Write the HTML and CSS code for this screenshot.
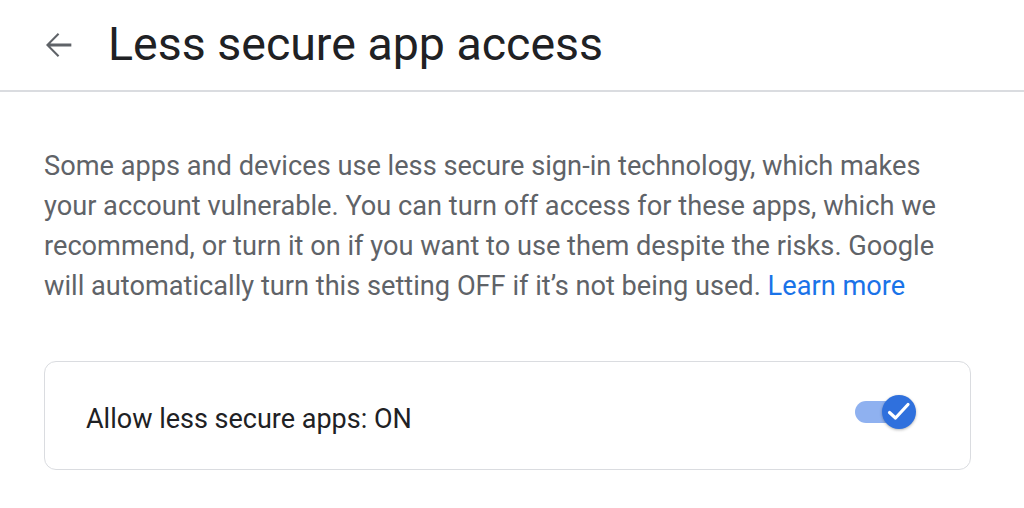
FILE: index.html
```html
<!DOCTYPE html>
<html lang="en">
<head>
    <meta charset="UTF-8">
    <meta name="viewport" content="width=device-width, initial-scale=1.0">
    <title>Less secure app access</title>
    <link rel="stylesheet" href="styles.css">
</head>
<body>
    <header class="topbar">
        <button class="back" aria-label="Back">
            <svg width="40" height="40" viewBox="0 0 24 24">
                <path d="M20 11.1H7.4l5.4-5.4-0.9-0.9L4.8 12l7.1 7.2 0.9-0.9-5.4-5.4H20z" fill="#5f6368"/>
            </svg>
        </button>
        <h1 class="title">Less secure app access</h1>
    </header>

    <main class="content">
        <p class="intro">
            Some apps and devices use less secure sign-in technology, which makes
            your account vulnerable. You can turn off access for these apps, which we
            recommend, or turn it on if you want to use them despite the risks. Google
            will automatically turn this setting OFF if it’s not being used.
            <a href="#" class="link">Learn more</a>
        </p>

        <div class="card">
            <span class="card-label">Allow less secure apps: ON</span>
            <div class="switch">
                <div class="track"></div>
                <div class="thumb">
                    <svg width="24" height="24" viewBox="0 0 24 24">
                        <path d="M2.5 12.5l6 5.5L21 4.5" fill="none" stroke="#fff" stroke-width="3.2" stroke-linecap="round" stroke-linejoin="round"/>
                    </svg>
                </div>
            </div>
        </div>
    </main>
</body>
</html>
```

FILE: styles.css
```css
body {
    margin: 0;
    background-color: #fff;
    font-family: Roboto, 'Noto Sans', sans-serif;
}
.topbar {
    display: flex;
    align-items: center;
    height: 90px;
    padding-left: 38px;
    border-bottom: 2px solid #dadce0;
}
.back {
    display: flex;
    padding: 0;
    border: none;
    background: none;
    cursor: pointer;
    margin-right: 30px;
}
.title {
    margin: 0 0 2px;
    font-size: 46.5px;
    font-weight: 400;
    color: #202124;
}
.content {
    padding: 0 53px 0 44px;
}
.intro {
    margin: 54px 0 55px;
    padding-right: 20px;
    font-size: 27.2px;
    line-height: 40px;
    color: #5f6368;
}
.link {
    color: #1a73e8;
    text-decoration: none;
}
.card {
    display: flex;
    align-items: center;
    justify-content: space-between;
    height: 107px;
    padding: 0 54px 0 41px;
    border: 1px solid #dadce0;
    border-radius: 12px;
}
.card-label {
    padding-top: 6px;
    font-size: 27px;
    color: #202124;
}
.switch {
    position: relative;
    width: 61px;
    height: 34px;
    margin-bottom: 8px;
}
.track {
    position: absolute;
    left: 0;
    top: 6px;
    width: 56px;
    height: 22px;
    border-radius: 11px;
    background-color: #8fb1f0;
}
.thumb {
    position: absolute;
    right: 0;
    top: 0;
    display: flex;
    align-items: center;
    justify-content: center;
    width: 34px;
    height: 34px;
    border-radius: 50%;
    background-color: #2f70dd;
    box-shadow: 0 1px 3px rgba(0, 0, 0, 0.3);
}
```
